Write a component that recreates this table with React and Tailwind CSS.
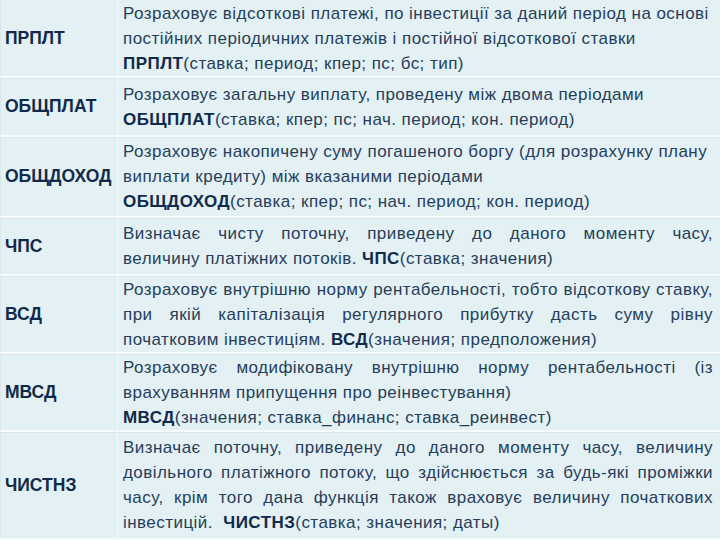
const rows = [
    {
        name: "ПРПЛТ",
        h: "h-[78px]",
        lines: [
            ["Розраховує відсоткові платежі, по інвестиції за даний період на основі"],
            ["постійних періодичних платежів і постійної відсоткової ставки"],
            [<b key="b">ПРПЛТ</b>, "(ставка; период; кпер; пс; бс; тип)"],
        ],
        stretch: [],
    },
    {
        name: "ОБЩПЛАТ",
        h: "h-[59px]",
        lines: [
            ["Розраховує загальну виплату, проведену між двома періодами"],
            [<b key="b">ОБЩПЛАТ</b>, "(ставка; кпер; пс; нач. период; кон. период)"],
        ],
        stretch: [],
    },
    {
        name: "ОБЩДОХОД",
        h: "h-[81px]",
        lines: [
            ["Розраховує накопичену суму погашеного боргу (для розрахунку плану"],
            ["виплати кредиту) між вказаними періодами"],
            [<b key="b">ОБЩДОХОД</b>, "(ставка; кпер; пс; нач. период; кон. период)"],
        ],
        stretch: [],
    },
    {
        name: "ЧПС",
        h: "h-[58px]",
        lines: [
            ["Визначає чисту поточну, приведену до даного моменту часу,"],
            ["величину платіжних потоків. ", <b key="b">ЧПС</b>, "(ставка; значения)"],
        ],
        stretch: [0],
    },
    {
        name: "ВСД",
        h: "h-[78px]",
        lines: [
            ["Розраховує внутрішню норму рентабельності, тобто відсоткову ставку,"],
            ["при якій капіталізація регулярного прибутку дасть суму рівну"],
            ["початковим інвестиціям. ", <b key="b">ВСД</b>, "(значения; предположения)"],
        ],
        stretch: [0, 1],
    },
    {
        name: "МВСД",
        h: "h-[78px]",
        lines: [
            ["Розраховує модифіковану внутрішню норму рентабельності (із"],
            ["врахуванням припущення про реінвестування)"],
            [<b key="b">МВСД</b>, "(значения; ставка_финанс; ставка_реинвест)"],
        ],
        stretch: [0],
    },
    {
        name: "ЧИСТНЗ",
        h: "h-[108px]",
        lines: [
            ["Визначає поточну, приведену до даного моменту часу, величину"],
            ["довільного платіжного потоку, що здійснюється за будь-які проміжки"],
            ["часу, крім того дана функція також враховує величину початкових"],
            ["інвестицій.  ", <b key="b">ЧИСТНЗ</b>, "(ставка; значения; даты)"],
        ],
        stretch: [0, 1, 2],
    },
];

export default function App() {
    return (
        <div
            className="w-[720px] h-[540px] overflow-hidden bg-[#e3f0f4] text-[#263e5a]"
            style={{ fontFamily: '"Liberation Sans", Arial, sans-serif' }}
        >
            {rows.map((row) => (
                <div
                    key={row.name}
                    className={"flex border-b-2 border-[#f5fafc] shadow-[0_1px_0_#d7e6eb] " + row.h}
                >
                    <div className="w-[118px] shrink-0 flex items-center pl-1 border-l border-[#d9e7eb] border-r border-r-[#f0f7f9]">
                        <span className="text-[17.5px] font-bold text-[#112a49]">
                            {row.name}
                        </span>
                    </div>
                    <div className="flex-1 min-w-0 flex flex-col justify-center pl-[5px] pr-[7px] text-[17px] tracking-[0.45px] leading-[25px] [&_b]:text-[#112a49]">
                        {row.lines.map((line, j) => (
                            <div
                                key={j}
                                className={
                                    row.stretch.includes(j)
                                        ? "whitespace-nowrap text-justify [text-align-last:justify]"
                                        : "whitespace-pre"
                                }
                            >
                                {line}
                            </div>
                        ))}
                    </div>
                </div>
            ))}
        </div>
    );
}
